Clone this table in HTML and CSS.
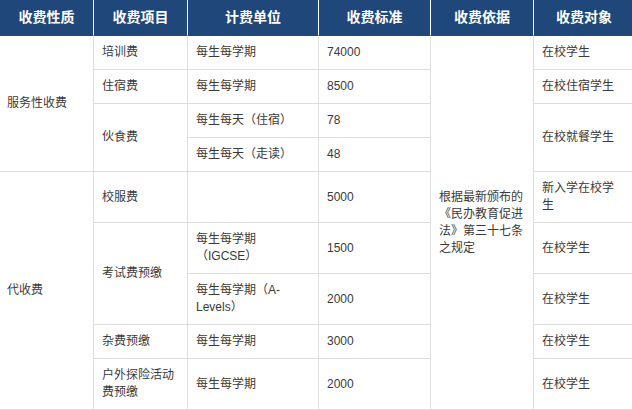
FILE: index.html
```html
<!DOCTYPE html>
<html lang="zh-CN">
<head>
<meta charset="utf-8">
<title>收费标准</title>
<link rel="stylesheet" href="styles.css">
</head>
<body>
<table class="fees">
  <thead>
    <tr>
      <th class="c1">收费性质</th>
      <th class="c2">收费项目</th>
      <th class="c3">计费单位</th>
      <th class="c4">收费标准</th>
      <th class="c5">收费依据</th>
      <th class="c6">收费对象</th>
    </tr>
  </thead>
  <tbody>
    <tr>
      <td rowspan="4" class="first">服务性收费</td>
      <td>培训费</td>
      <td>每生每学期</td>
      <td>74000</td>
      <td rowspan="9">根据最新颁布的《民办教育促进法》第三十七条之规定</td>
      <td>在校学生</td>
    </tr>
    <tr>
      <td>住宿费</td>
      <td>每生每学期</td>
      <td>8500</td>
      <td>在校住宿学生</td>
    </tr>
    <tr>
      <td rowspan="2">伙食费</td>
      <td>每生每天（住宿）</td>
      <td>78</td>
      <td rowspan="2">在校就餐学生</td>
    </tr>
    <tr>
      <td>每生每天（走读）</td>
      <td>48</td>
    </tr>
    <tr>
      <td rowspan="5" class="first">代收费</td>
      <td>校服费</td>
      <td></td>
      <td>5000</td>
      <td>新入学在校学生</td>
    </tr>
    <tr>
      <td rowspan="2">考试费预缴</td>
      <td>每生每学期（IGCSE）</td>
      <td>1500</td>
      <td>在校学生</td>
    </tr>
    <tr>
      <td>每生每学期（A-Levels）</td>
      <td>2000</td>
      <td>在校学生</td>
    </tr>
    <tr>
      <td>杂费预缴</td>
      <td>每生每学期</td>
      <td>3000</td>
      <td>在校学生</td>
    </tr>
    <tr>
      <td>户外探险活动费预缴</td>
      <td>每生每学期</td>
      <td>2000</td>
      <td>在校学生</td>
    </tr>
  </tbody>
</table>
</body>
</html>
```

FILE: styles.css
```css
html, body {
  margin: 0;
  padding: 0;
  overflow: hidden;
  background: #ffffff;
}

.fees {
  border-collapse: separate;
  border-spacing: 0;
  table-layout: fixed;
  width: 634px;
  font-family: "Liberation Sans", "Noto Sans CJK SC", sans-serif;
  font-size: 12px;
  line-height: 17px;
  color: #3a3a3a;
}

.fees th,
.fees td {
  box-sizing: border-box;
}

.fees th {
  background: #1f477a;
  color: #ffffff;
  font-size: 14px;
  font-weight: bold;
  text-align: center;
  padding: 9px 4px;
  border-right: 1px solid #ffffff;
  border-bottom: 1px solid #1f477a;
  white-space: nowrap;
}

.fees th.c6 {
  border-right: none;
}

.c1 { width: 94px; }
.c2 { width: 94px; }
.c3 { width: 131px; }
.c4 { width: 112px; }
.c5 { width: 103px; }
.c6 { width: 100px; }

.fees td {
  padding: 8px;
  text-align: left;
  vertical-align: middle;
  border-right: 1px solid #dddddd;
  border-bottom: 1px solid #dddddd;
  word-break: normal;
  line-break: normal;
}

.fees td.first {
  padding-left: 7px;
}
```
